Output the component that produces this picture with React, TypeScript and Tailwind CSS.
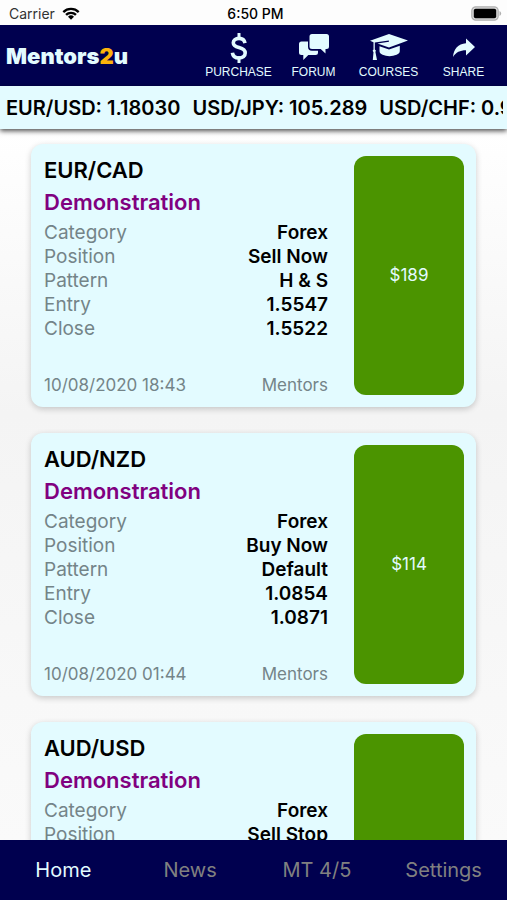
interface Signal {
  pair: string;
  label: string;
  details: [string, string][];
  date: string;
  author: string;
  profit: string;
}

const signals: Signal[] = [
  {
    pair: "EUR/CAD",
    label: "Demonstration",
    details: [["Category", "Forex"], ["Position", "Sell Now"], ["Pattern", "H & S"], ["Entry", "1.5547"], ["Close", "1.5522"]],
    date: "10/08/2020 18:43",
    author: "Mentors",
    profit: "$189",
  },
  {
    pair: "AUD/NZD",
    label: "Demonstration",
    details: [["Category", "Forex"], ["Position", "Buy Now"], ["Pattern", "Default"], ["Entry", "1.0854"], ["Close", "1.0871"]],
    date: "10/08/2020 01:44",
    author: "Mentors",
    profit: "$114",
  },
  {
    pair: "AUD/USD",
    label: "Demonstration",
    details: [["Category", "Forex"], ["Position", "Sell Stop"]],
    date: "",
    author: "",
    profit: "",
  },
];

const rates = ["EUR/USD: 1.18030", "USD/JPY: 105.289", "USD/CHF: 0.9"];
const tabs = ["Home", "News", "MT 4/5", "Settings"];

function WifiIcon() {
  return (
    <svg viewBox="0 0 18 13" className="w-[18px] h-[13px]" aria-hidden="true">
      <path d="M0.5 4.2a12.2 12.2 0 0 1 17 0l-1.6 1.7a9.8 9.8 0 0 0-13.8 0z" />
      <path d="M3.2 7a8.3 8.3 0 0 1 11.6 0l-1.7 1.7a5.9 5.9 0 0 0-8.2 0z" />
      <path d="M6 9.8a4.3 4.3 0 0 1 6 0l-3 3z" />
    </svg>
  );
}

function BatteryIcon() {
  return (
    <svg viewBox="0 0 31 15" className="w-[31px] h-[15px]" aria-hidden="true">
      <rect x="0.8" y="0.8" width="26.4" height="13.4" rx="4" fill="#d9d9d9" stroke="#b0b0b0" strokeWidth="1.2" />
      <rect x="2.8" y="2.8" width="22.4" height="9.4" rx="1.8" />
      <path d="M28.5 5v5a2.7 2.7 0 0 0 0-5z" fill="#b0b0b0" />
    </svg>
  );
}

function DollarIcon() {
  return (
    <svg viewBox="0 0 18 30" className="w-[18px] h-[30px]" fill="none" stroke="currentColor" strokeWidth="3.6" aria-hidden="true">
      <path d="M15 10.2C14.400 7 12.300 5.400 9 5.400c-3.500 0-5.700 1.700-5.700 4.300 0 2.500 1.700 3.800 5.700 4.900 4.500 1.200 6.200 2.800 6.200 5.500 0 3-2.400 4.900-6.200 4.900-3.700 0-6.200-1.900-6.600-5.300" />
      <path d="M9 0.500V5.500M9 24.500V29.500" strokeLinecap="round" strokeWidth="3" />
    </svg>
  );
}

function ForumIcon() {
  return (
    <svg viewBox="0 0 30 27" className="w-[30px] h-[27px]" fill="currentColor" aria-hidden="true">
      <path d="M13 0H27.500a2.500 2.500 0 0 1 2.500 2.500V12.500a2.500 2.500 0 0 1-2.500 2.500H26.500V19.500l-4.800-4.500H13A2.500 2.500 0 0 1 10.500 12.500V2.500A2.500 2.500 0 0 1 13 0z" />
      <path d="M9 7.500H2.500A2.500 2.500 0 0 0 0 10V18.500A2.500 2.500 0 0 0 2.500 21H4.300V26l5-5H16.500A2.500 2.500 0 0 0 19 18.500V16.800H13a4 4 0 0 1-4-4z" />
    </svg>
  );
}

function CapIcon() {
  return (
    <svg viewBox="0 0 38 27" className="w-[38px] h-[27px]" fill="currentColor" aria-hidden="true">
      <path d="M19 0 38 6.500 19 13.500 7.500 9.500 19 7.800 18.800 6.600 4.800 8.600V15.500a1.700 1.700 0 0 1 .6 2.600L7 26H2.800L3.500 18.200a1.700 1.700 0 0 1 0-2.700V8.200L0 6.700z" />
      <path d="M9.500 12.300 19 15.600 29.800 11.700V17c0 1.800-1.200 2.900-3.200 3.800-4.500 1.900-9.800 1.900-14 0-2-.9-3.100-2-3.100-3.800z" />
    </svg>
  );
}

function ShareIcon() {
  return (
    <svg viewBox="0 0 24 20" className="w-6 h-5" fill="currentColor" aria-hidden="true">
      <path d="M14 0.500 23 9 14 17.500V12.300C8 12.300 4 14.300 1 19 1.800 11 6 6 14 5.300z" />
    </svg>
  );
}

const actions = [
  { name: "PURCHASE", icon: <DollarIcon /> },
  { name: "FORUM", icon: <ForumIcon /> },
  { name: "COURSES", icon: <CapIcon /> },
  { name: "SHARE", icon: <ShareIcon /> },
];

function SignalCard({ signal }: { signal: Signal }) {
  return (
    <article className="flex min-h-[263px] shrink-0 rounded-xl bg-[#e3fbff] p-3 pl-[13px] shadow-[0_2px_6px_rgba(0,0,0,0.2)]">
      <div className="flex flex-1 flex-col pr-[26px]">
        <h2 className="text-[22px] leading-7 font-semibold text-black">{signal.pair}</h2>
        <p className="mt-1 text-[22px] leading-7 font-semibold text-[#800080]">{signal.label}</p>
        <dl className="mt-[5px] text-[19px] leading-6">
          {signal.details.map(([name, value]) => (
            <div key={name} className="flex justify-between">
              <dt className="text-[#748488]">{name}</dt>
              <dd className="font-semibold text-black">{value}</dd>
            </div>
          ))}
        </dl>
        <div className="mt-auto flex justify-between text-[17px] leading-5 text-[#748488]">
          <span>{signal.date}</span>
          <span>{signal.author}</span>
        </div>
      </div>
      <div className="flex w-[110px] shrink-0 items-center justify-center rounded-xl bg-[#4b9400] text-[17px] text-[#e3fbff]">
        {signal.profit}
      </div>
    </article>
  );
}

export default function App() {
  return (
    <div className="flex h-screen flex-col overflow-hidden bg-[#f8f8f8] font-['Inter',sans-serif]">
      <div className="grid h-[25px] shrink-0 grid-cols-3 items-center bg-[#fdfdfd] pt-0.5 pr-[5px] pl-[9px] text-sm text-black">
        <div className="flex items-center gap-[7px] text-[#333]">
          Carrier
          <WifiIcon />
        </div>
        <span className="text-center font-medium">6:50 PM</span>
        <div className="flex justify-end">
          <BatteryIcon />
        </div>
      </div>

      <header className="flex h-[61px] shrink-0 items-center justify-between bg-[#00004f] px-1.5 text-[#e3fbff]">
        <h1 className="pt-0.5 text-[22px] font-black">
          Mentors<span className="text-[#fcb30b]">2</span>u
        </h1>
        <div className="grid grid-cols-[repeat(4,75px)]">
          {actions.map(a => (
            <button key={a.name} className="flex flex-col items-center text-xs leading-4 font-['Liberation_Sans',sans-serif]">
              <span className="flex h-8 items-center">{a.icon}</span>
              {a.name}
            </button>
          ))}
        </div>
      </header>

      <div className="z-10 flex h-[43px] shrink-0 items-center bg-[#e3fbff] pr-1 pl-1.5 shadow-[0_2px_5px_rgba(0,0,0,0.7)]">
        <div className="flex flex-1 gap-3 overflow-hidden text-xl font-semibold whitespace-nowrap text-black">
          {rates.map(r => <span key={r}>{r}</span>)}
        </div>
      </div>

      <main className="flex min-h-0 flex-1 flex-col gap-[26px] overflow-hidden bg-linear-to-b from-white via-[#f4f4f4] via-40% to-[#fafafa] px-[31px] pt-[15px]">
        {signals.map(s => <SignalCard key={s.pair} signal={s} />)}
      </main>

      <nav className="grid h-[60px] shrink-0 grid-cols-4 items-center bg-[#00004f] text-center text-xl text-[#808080]">
        {tabs.map(t => (
          <a key={t} href={"#" + t} className={t === "Home" ? "text-[#e3fbff]" : ""}>{t}</a>
        ))}
      </nav>
    </div>
  );
}
